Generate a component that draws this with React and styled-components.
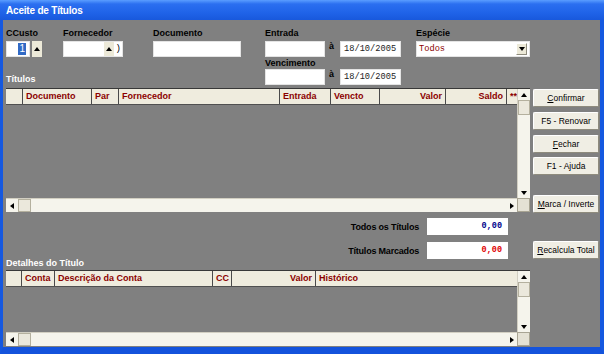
import React from 'react';
import styled, { createGlobalStyle } from 'styled-components';

const GlobalStyle = createGlobalStyle`
  * { box-sizing: border-box; }
  html, body { margin: 0; padding: 0; background: #808080; }
  body { font-family: "Liberation Sans", Arial, sans-serif; }
`;

const Window = styled.div`
  width: 604px;
  height: 354px;
  display: flex;
  flex-direction: column;
  overflow: hidden;
`;

const TitleBar = styled.div`
  height: 20px;
  flex-shrink: 0;
  padding: 2px 0 0 6px;
  line-height: 18px;
  font-size: 10px;
  font-weight: bold;
  letter-spacing: -0.2px;
  color: #fff;
  background: linear-gradient(180deg, #5a9dff 0%, #2b6ff0 20%, #1f63e8 65%, #1858dc 100%);
`;

const Body = styled.div`
  flex: 1;
  display: flex;
  flex-direction: column;
  background: #808080;
  padding: 7px 1px 0 3px;
  border-left: 3px solid #1558e0;
  border-right: 4px solid #1558e0;
  border-bottom: 7px solid #1453dc;
`;

/* ---- filter area ---- */

const Filters = styled.div`
  display: flex;
  align-items: stretch;
`;

const FieldCol = styled.div`
  width: ${p => p.$w}px;
  display: flex;
  flex-direction: column;
`;

const Label = styled.div`
  font-size: 9px;
  font-weight: bold;
  color: #000;
  line-height: 12px;
  height: 12px;
  margin-bottom: ${p => p.$gap ?? 2}px;
  white-space: nowrap;
`;

const SectionLabel = styled.div`
  font-size: 9px;
  font-weight: bold;
  color: #fff;
  line-height: 12px;
  height: 12px;
  margin-top: ${p => (p.$push ? 'auto' : `${p.$top || 0}px`)};
  white-space: nowrap;
`;

const ControlRow = styled.div`
  display: flex;
  align-items: flex-start;
  height: 16px;
`;

const TextBox = styled.div`
  width: ${p => p.$w}px;
  height: 16px;
  background: #fff;
  border: 1px solid #e4e4e4;
  display: flex;
  align-items: center;
  justify-content: ${p => p.$justify || 'flex-start'};
  padding: 0 ${p => p.$pad ?? 3}px;
  font-family: "Liberation Mono", "Courier New", monospace;
  font-size: 8.7px;
  color: ${p => p.$color || '#222'};
  white-space: nowrap;
`;

const Selected = styled.span`
  background: #316ac5;
  color: #fff;
  font-family: "Liberation Sans", Arial, sans-serif;
  font-size: 10px;
  line-height: 12px;
  padding: 0 1px;
`;

const Spin = styled.div`
  width: 10px;
  height: ${p => p.$h || 16}px;
  margin-left: ${p => p.$ml || 0}px;
  background: #ece9d8;
  display: flex;
  align-items: center;
  justify-content: center;
  flex-shrink: 0;
`;

const Paren = styled.span`
  font-size: 9px;
  color: #000;
  margin-left: 2px;
`;

const ToMark = styled.span`
  font-size: 9px;
  font-weight: bold;
  color: #000;
  margin: 0 6px 0 4px;
  line-height: 10px;
`;

const DropBtn = styled.div`
  width: 11px;
  height: 12px;
  margin-left: auto;
  background: #ece9d8;
  border: 1px solid;
  border-color: #fff #8f8c7e #8f8c7e #fff;
  display: flex;
  align-items: center;
  justify-content: center;
`;

const Arrow = styled.span`
  width: 0;
  height: 0;
  border-style: solid;
  ${p => p.$dir === 'up' && 'border-width: 0 3.5px 4px 3.5px; border-color: transparent transparent #000 transparent;'}
  ${p => p.$dir === 'down' && 'border-width: 4px 3.5px 0 3.5px; border-color: #000 transparent transparent transparent;'}
  ${p => p.$dir === 'left' && 'border-width: 3.5px 4px 3.5px 0; border-color: transparent #000 transparent transparent;'}
  ${p => p.$dir === 'right' && 'border-width: 3.5px 0 3.5px 4px; border-color: transparent transparent transparent #000;'}
`;

/* ---- main area ---- */

const Main = styled.div`
  display: flex;
  gap: 3px;
  margin-top: 3px;
`;

const LeftCol = styled.div`
  width: 524px;
  display: flex;
  flex-direction: column;
`;

const GridFrame = styled.div`
  display: grid;
  grid-template-columns: 1fr 13px;
  grid-template-rows: 1fr 14px;
  height: ${p => p.$h}px;
  margin-top: ${p => p.$top || 0}px;
  border-top: 1px solid #383838;
  background: #808080;
`;

const TableArea = styled.div`
  grid-row: 1;
  grid-column: 1;
  overflow: hidden;
`;

const HeaderRow = styled.div`
  display: flex;
  height: 16px;
  background: #efecde;
  border-bottom: 1px solid #505050;
`;

const HeaderCell = styled.div`
  width: ${p => (p.$w ? `${p.$w}px` : 'auto')};
  flex: ${p => (p.$w ? '0 0 auto' : '1')};
  border-right: ${p => (p.$last ? 'none' : '1px solid #4a4a4a')};
  padding: 0 3px;
  text-align: ${p => p.$align || 'left'};
  font-size: 9px;
  font-weight: bold;
  color: #8b0000;
  line-height: 15px;
  white-space: nowrap;
  overflow: hidden;
`;

const VScroll = styled.div`
  grid-row: 1;
  grid-column: 2;
  display: flex;
  flex-direction: column;
  background: #f5f4ec;
  border-left: 1px solid #d2cfc2;
`;

const HScroll = styled.div`
  grid-row: 2;
  grid-column: 1;
  display: flex;
  background: #f5f4ec;
  border-top: 1px solid #d2cfc2;
`;

const ScrollBtn = styled.div`
  flex: 0 0 ${p => p.$size}px;
  display: flex;
  align-items: center;
  justify-content: center;
`;

const Thumb = styled.div`
  flex: 0 0 ${p => p.$size}px;
  background: #ebe8dc;
  border: 1px solid #b4b09e;
`;

const Track = styled.div`
  flex: 1;
`;

const Corner = styled.div`
  grid-row: 2;
  grid-column: 2;
  background: #e4e1d4;
  border: 1px solid #a8a493;
`;

const Totals = styled.div`
  display: flex;
  flex-direction: column;
  align-items: flex-end;
  gap: 7px;
  margin-top: 6px;
  padding-right: 22px;
`;

const TotalRow = styled.div`
  display: flex;
  align-items: center;
  gap: 8px;
`;

const TotalLabel = styled.div`
  font-size: 9px;
  font-weight: bold;
  letter-spacing: -0.2px;
  color: #000;
`;

const AmountBox = styled.div`
  width: 81px;
  height: 17px;
  background: #fff;
  padding-right: 6px;
  text-align: right;
  line-height: 17px;
  font-family: "Liberation Mono", "Courier New", monospace;
  font-size: 8.5px;
  font-weight: bold;
  color: ${p => p.$color};
`;

const SideButtons = styled.div`
  width: 66px;
  display: flex;
  flex-direction: column;
`;

const ActionButton = styled.button`
  margin-top: ${p => p.$top}px;
  width: 66px;
  height: 18px;
  padding: 0;
  background: #f0eee4;
  border: 1px solid;
  border-color: #fff #8e8b7d #8e8b7d #fff;
  border-radius: 2px;
  font-family: "Liberation Sans", Arial, sans-serif;
  font-size: 8.5px;
  color: #000;
  white-space: nowrap;
`;

const titulosCols = [
  { label: '', w: 17 },
  { label: 'Documento', w: 69 },
  { label: 'Par', w: 27 },
  { label: 'Fornecedor', w: 161 },
  { label: 'Entrada', w: 51 },
  { label: 'Vencto', w: 49 },
  { label: 'Valor', w: 66, align: 'right' },
  { label: 'Saldo', w: 61, align: 'right' },
  { label: '**', last: true },
];

const detalheCols = [
  { label: '', w: 16 },
  { label: 'Conta', w: 33 },
  { label: 'Descrição da Conta', w: 158 },
  { label: 'CC', w: 19 },
  { label: 'Valor', w: 84, align: 'right' },
  { label: 'Histórico', last: true },
];

function DataGrid({ columns, height, top }) {
  return (
    <GridFrame $h={height} $top={top}>
      <TableArea>
        <HeaderRow>
          {columns.map((c, i) => (
            <HeaderCell key={i} $w={c.w} $align={c.align} $last={c.last}>
              {c.label}
            </HeaderCell>
          ))}
        </HeaderRow>
      </TableArea>
      <VScroll>
        <ScrollBtn $size={11}><Arrow $dir="up" /></ScrollBtn>
        <Thumb $size={15} />
        <Track />
        <ScrollBtn $size={11}><Arrow $dir="down" /></ScrollBtn>
      </VScroll>
      <HScroll>
        <ScrollBtn $size={12}><Arrow $dir="left" /></ScrollBtn>
        <Thumb $size={13} />
        <Track />
        <ScrollBtn $size={11}><Arrow $dir="right" /></ScrollBtn>
      </HScroll>
      <Corner />
    </GridFrame>
  );
}

export default function App() {
  return (
    <Window>
      <GlobalStyle />
      <TitleBar>Aceite de Títulos</TitleBar>
      <Body>
        <Filters>
          <FieldCol $w={57}>
            <Label>CCusto</Label>
            <ControlRow>
              <TextBox $w={24} $justify="flex-end" $pad={3}>
                <Selected>1</Selected>
              </TextBox>
              <Spin $ml={2}><Arrow $dir="up" /></Spin>
            </ControlRow>
            <SectionLabel $push>Títulos</SectionLabel>
          </FieldCol>

          <FieldCol $w={90}>
            <Label>Fornecedor</Label>
            <ControlRow>
              <TextBox $w={60} $justify="flex-end" $pad={1}>
                <Spin $h={14}><Arrow $dir="up" /></Spin>
                <Paren>)</Paren>
              </TextBox>
            </ControlRow>
          </FieldCol>

          <FieldCol $w={112}>
            <Label>Documento</Label>
            <ControlRow>
              <TextBox $w={88} />
            </ControlRow>
          </FieldCol>

          <FieldCol $w={151}>
            <Label>Entrada</Label>
            <ControlRow>
              <TextBox $w={60} />
              <ToMark>à</ToMark>
              <TextBox $w={61}>18/10/2005</TextBox>
            </ControlRow>
            <Label $gap={0}>Vencimento</Label>
            <ControlRow>
              <TextBox $w={60} />
              <ToMark>à</ToMark>
              <TextBox $w={61}>18/10/2005</TextBox>
            </ControlRow>
          </FieldCol>

          <FieldCol $w={114}>
            <Label>Espécie</Label>
            <ControlRow>
              <TextBox $w={114} $color="#8b0000" $pad={2}>
                Todos
                <DropBtn><Arrow $dir="down" /></DropBtn>
              </TextBox>
            </ControlRow>
          </FieldCol>
        </Filters>

        <Main>
          <LeftCol>
            <DataGrid columns={titulosCols} height={124} />
            <Totals>
              <TotalRow>
                <TotalLabel>Todos os Títulos</TotalLabel>
                <AmountBox $color="#00008b">0,00</AmountBox>
              </TotalRow>
              <TotalRow>
                <TotalLabel>Títulos Marcados</TotalLabel>
                <AmountBox $color="#e00000">0,00</AmountBox>
              </TotalRow>
            </Totals>
            <SectionLabel $top={-2}>Detalhes do Título</SectionLabel>
            <DataGrid columns={detalheCols} height={76} top={1} />
          </LeftCol>

          <SideButtons>
            <ActionButton $top={1}><u>C</u>onfirmar</ActionButton>
            <ActionButton $top={5}>F5 - Renovar</ActionButton>
            <ActionButton $top={5}><u>F</u>echar</ActionButton>
            <ActionButton $top={4}>F1 - Ajuda</ActionButton>
            <ActionButton $top={20}><u>M</u>arca / Inverte</ActionButton>
            <ActionButton $top={28}><u>R</u>ecalcula Total</ActionButton>
          </SideButtons>
        </Main>
      </Body>
    </Window>
  );
}
